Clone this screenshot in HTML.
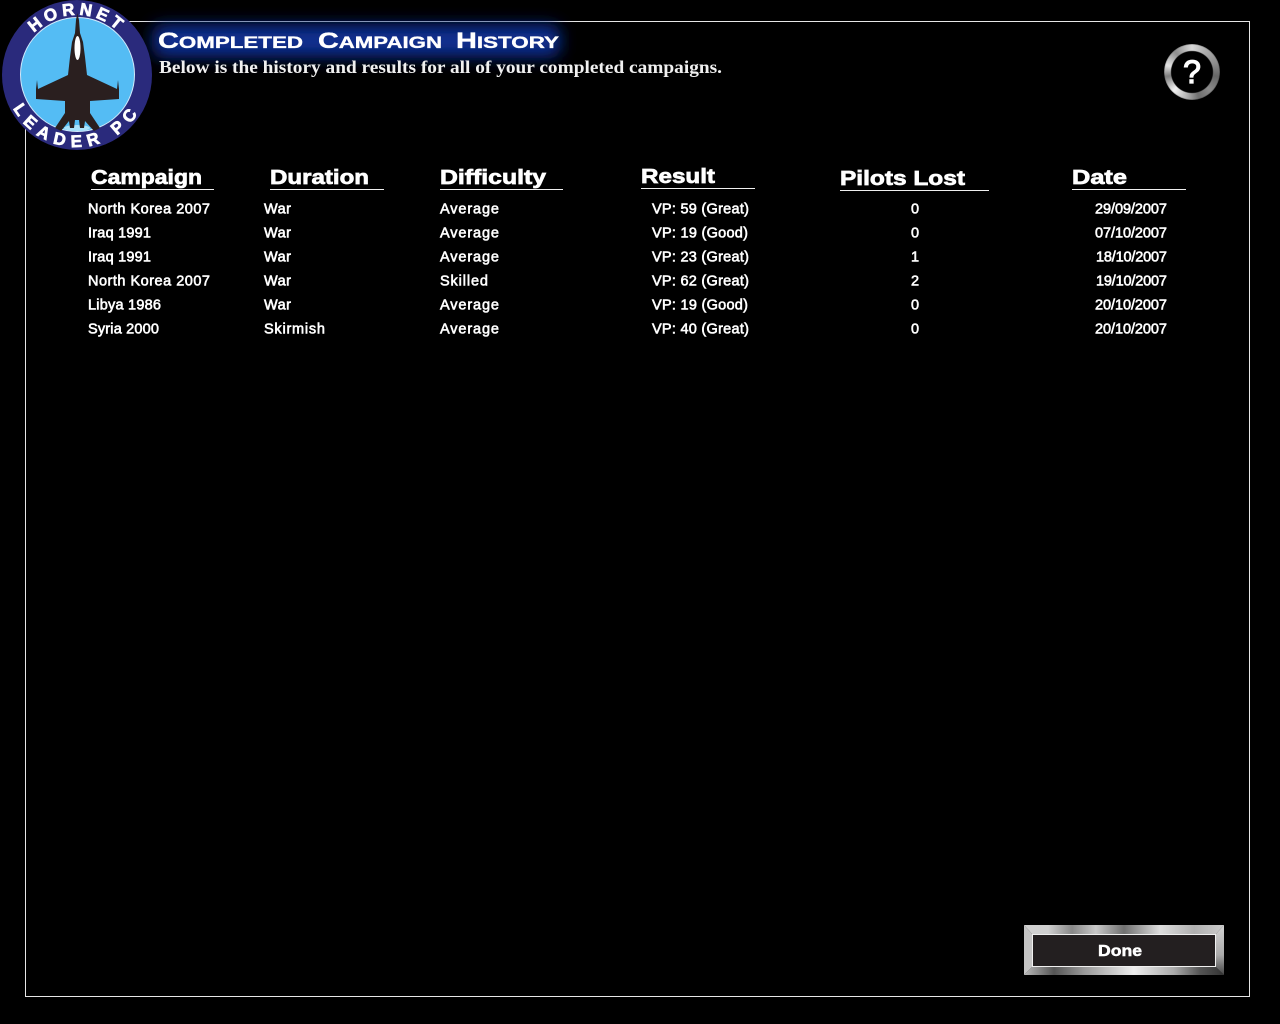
<!DOCTYPE html>
<html>
<head>
<meta charset="utf-8">
<title>Completed Campaign History</title>
<style>
html,body{margin:0;padding:0;background:#000;width:1280px;height:1024px;overflow:hidden}
svg{display:block;position:absolute;left:0;top:0}
text{font-family:"Liberation Sans",sans-serif;fill:#fff}
.r{font-size:14.5px;stroke:#fff;stroke-width:.6px}
.h{font-size:20px;font-weight:bold;stroke:#fff;stroke-width:.7px}
.t{font-weight:bold;fill:#fff;stroke:#fff;stroke-width:.35px}
.ln{fill:#f0f0f0}
.ring{position:absolute;left:1164px;top:44px;width:56px;height:56px;border-radius:50%;
background:conic-gradient(from 0deg,#d8d8d8 0deg,#b0b0b0 30deg,#8c8c8c 70deg,#666 100deg,#8a8a8a 135deg,#6e6e6e 165deg,#b8b8b8 195deg,#f2f2f2 225deg,#7c7c7c 260deg,#e4e4e4 285deg,#8e8e8e 320deg,#d8d8d8 360deg);
-webkit-mask:radial-gradient(circle at center,transparent 20.5px,#000 21.5px);mask:radial-gradient(circle at center,transparent 20.5px,#000 21.5px);filter:blur(.4px)}
</style>
</head>
<body>
<svg width="1280" height="1024" viewBox="0 0 1280 1024" xmlns="http://www.w3.org/2000/svg">
<defs>
<filter id="blur" x="-20%" y="-100%" width="140%" height="300%"><feGaussianBlur stdDeviation="8"/></filter>
<path id="arcTop" d="M17 75 A60 60 0 0 1 137 75"/>
<path id="arcBot" d="M5 75 A72 72 0 0 0 149 75"/>
<linearGradient id="btnH" x1="0" y1="0" x2="1" y2="0">
<stop offset="0" stop-color="#d0d0d0"/><stop offset=".12" stop-color="#cfcfcf"/><stop offset=".24" stop-color="#888"/><stop offset=".36" stop-color="#c8c8c8"/><stop offset=".5" stop-color="#707070"/><stop offset=".68" stop-color="#ddd"/><stop offset=".85" stop-color="#b0b0b0"/><stop offset="1" stop-color="#ccc"/>
</linearGradient>
<linearGradient id="btnB" x1="0" y1="0" x2="1" y2="0">
<stop offset="0" stop-color="#bbb"/><stop offset=".15" stop-color="#555"/><stop offset=".3" stop-color="#999"/><stop offset=".55" stop-color="#eee"/><stop offset=".75" stop-color="#aaa"/><stop offset=".88" stop-color="#555"/><stop offset="1" stop-color="#333"/>
</linearGradient>
<linearGradient id="btnR" x1="0" y1="0" x2="0" y2="1">
<stop offset="0" stop-color="#d4d4d4"/><stop offset=".6" stop-color="#aaa"/><stop offset="1" stop-color="#444"/>
</linearGradient>
</defs>

<rect x="25.5" y="21.5" width="1224" height="975" fill="none" stroke="#e6e6e6" stroke-width="1"/>

<!-- title glow -->
<rect x="152" y="24" width="408" height="34" rx="10" fill="#0a2472" filter="url(#blur)"/>
<rect x="160" y="33" width="396" height="15" rx="6" fill="#10349a" filter="url(#blur)"/>

<!-- logo -->
<circle cx="77" cy="75" r="75" fill="#2a2a7c"/>
<circle cx="77.5" cy="74.5" r="57" fill="#54bcf4" stroke="#cfe9fb" stroke-width="1"/>
<ellipse cx="77" cy="128" rx="13" ry="3" fill="#a9e2fb"/>
<path d="M77.3 13 L79 20 L80 33 L83 42 L85 57 L87 75 L117 89 L118 80 L119 89 L119 99 L90 101 L90 113 L100 128 L94 131 L85 121 L84 128 L80 128 L79 120 L75 120 L74 128 L70 128 L69 121 L61 131 L55 128 L65 113 L65 101 L36 99 L36 89 L37 80 L38 89 L68 75 L70 57 L72 42 L75 33 L76 20 Z" fill="#2a1f1f"/>
<ellipse cx="77.5" cy="48" rx="3" ry="12" fill="#fff"/>
<g font-weight="bold" font-size="17" style="stroke:#fff;stroke-width:.7px">
<text style="letter-spacing:4px"><textPath href="#arcTop" startOffset="50%" text-anchor="middle" style="font-weight:bold">HORNET</textPath></text>
<text style="letter-spacing:6.5px"><textPath href="#arcBot" startOffset="50%" text-anchor="middle" style="font-weight:bold">LEADER PC</textPath></text>
</g>

<!-- title -->
<text class="t" x="158" y="48" textLength="145" lengthAdjust="spacingAndGlyphs"><tspan font-size="22">C</tspan><tspan font-size="17">OMPLETED</tspan></text>
<text class="t" x="318" y="48" textLength="124" lengthAdjust="spacingAndGlyphs"><tspan font-size="22">C</tspan><tspan font-size="17">AMPAIGN</tspan></text>
<text class="t" x="456" y="48" textLength="103" lengthAdjust="spacingAndGlyphs"><tspan font-size="22">H</tspan><tspan font-size="17">ISTORY</tspan></text>
<text x="159" y="73" textLength="563" lengthAdjust="spacingAndGlyphs" style="font-family:'Liberation Serif',serif;font-weight:bold;font-size:18px;fill:#f0f0f0">Below is the history and results for all of your completed campaigns.</text>

<!-- help icon glyph -->
<text x="1192" y="83" text-anchor="middle" font-size="32" style="stroke:#fff;stroke-width:1.2px">?</text>

<!-- headers -->
<text class="h" x="91" y="184" textLength="111" lengthAdjust="spacingAndGlyphs">Campaign</text>
<rect class="ln" x="91" y="189" width="123" height="1"/>
<text class="h" x="270" y="184" textLength="99" lengthAdjust="spacingAndGlyphs">Duration</text>
<rect class="ln" x="270" y="189" width="114" height="1"/>
<text class="h" x="440" y="184" textLength="106" lengthAdjust="spacingAndGlyphs">Difficulty</text>
<rect class="ln" x="440" y="189" width="123" height="1"/>
<text class="h" x="641" y="183" textLength="74" lengthAdjust="spacingAndGlyphs">Result</text>
<rect class="ln" x="641" y="188" width="114" height="1"/>
<text class="h" x="840" y="185" textLength="125" lengthAdjust="spacingAndGlyphs">Pilots Lost</text>
<rect class="ln" x="840" y="190" width="149" height="1"/>
<text class="h" x="1072" y="184" textLength="55" lengthAdjust="spacingAndGlyphs">Date</text>
<rect class="ln" x="1072" y="189" width="114" height="1"/>

<!-- rows -->
<g class="rows">
<text class="r" x="88" y="213.5" textLength="122">North Korea 2007</text>
<text class="r" x="264" y="213.5" textLength="27">War</text>
<text class="r" x="440" y="213.5" textLength="59">Average</text>
<text class="r" x="652" y="213.5" textLength="97">VP: 59 (Great)</text>
<text class="r" x="915" y="213.5" text-anchor="middle">0</text>
<text class="r" x="1095" y="213.5" textLength="72">29/09/2007</text>

<text class="r" x="88" y="237.5" textLength="63">Iraq 1991</text>
<text class="r" x="264" y="237.5" textLength="27">War</text>
<text class="r" x="440" y="237.5" textLength="59">Average</text>
<text class="r" x="652" y="237.5" textLength="96">VP: 19 (Good)</text>
<text class="r" x="915" y="237.5" text-anchor="middle">0</text>
<text class="r" x="1095" y="237.5" textLength="72">07/10/2007</text>

<text class="r" x="88" y="261.5" textLength="63">Iraq 1991</text>
<text class="r" x="264" y="261.5" textLength="27">War</text>
<text class="r" x="440" y="261.5" textLength="59">Average</text>
<text class="r" x="652" y="261.5" textLength="97">VP: 23 (Great)</text>
<text class="r" x="915" y="261.5" text-anchor="middle">1</text>
<text class="r" x="1096" y="261.5" textLength="71">18/10/2007</text>

<text class="r" x="88" y="285.5" textLength="122">North Korea 2007</text>
<text class="r" x="264" y="285.5" textLength="27">War</text>
<text class="r" x="440" y="285.5" textLength="48">Skilled</text>
<text class="r" x="652" y="285.5" textLength="97">VP: 62 (Great)</text>
<text class="r" x="915" y="285.5" text-anchor="middle">2</text>
<text class="r" x="1096" y="285.5" textLength="71">19/10/2007</text>

<text class="r" x="88" y="309.5" textLength="73">Libya 1986</text>
<text class="r" x="264" y="309.5" textLength="27">War</text>
<text class="r" x="440" y="309.5" textLength="59">Average</text>
<text class="r" x="652" y="309.5" textLength="96">VP: 19 (Good)</text>
<text class="r" x="915" y="309.5" text-anchor="middle">0</text>
<text class="r" x="1095" y="309.5" textLength="72">20/10/2007</text>

<text class="r" x="88" y="333.5" textLength="71">Syria 2000</text>
<text class="r" x="264" y="333.5" textLength="61">Skirmish</text>
<text class="r" x="440" y="333.5" textLength="59">Average</text>
<text class="r" x="652" y="333.5" textLength="97">VP: 40 (Great)</text>
<text class="r" x="915" y="333.5" text-anchor="middle">0</text>
<text class="r" x="1095" y="333.5" textLength="72">20/10/2007</text>
</g>

<!-- done button -->
<polygon points="1024,925 1224,925 1216,934 1032,934" fill="url(#btnH)"/>
<polygon points="1024,975 1224,975 1216,967 1032,967" fill="url(#btnB)"/>
<polygon points="1024,925 1032,934 1032,967 1024,975" fill="#c4c4c4"/>
<polygon points="1224,925 1216,934 1216,967 1224,975" fill="url(#btnR)"/>
<rect x="1032.5" y="934.5" width="183" height="32" fill="#231f20" stroke="#f0f0f0" stroke-width="1"/>
<text x="1098" y="956" textLength="44" lengthAdjust="spacingAndGlyphs" font-size="16" font-weight="bold" style="stroke:#fff;stroke-width:.5px">Done</text>
</svg>
<div class="ring"></div>
</body>
</html>
